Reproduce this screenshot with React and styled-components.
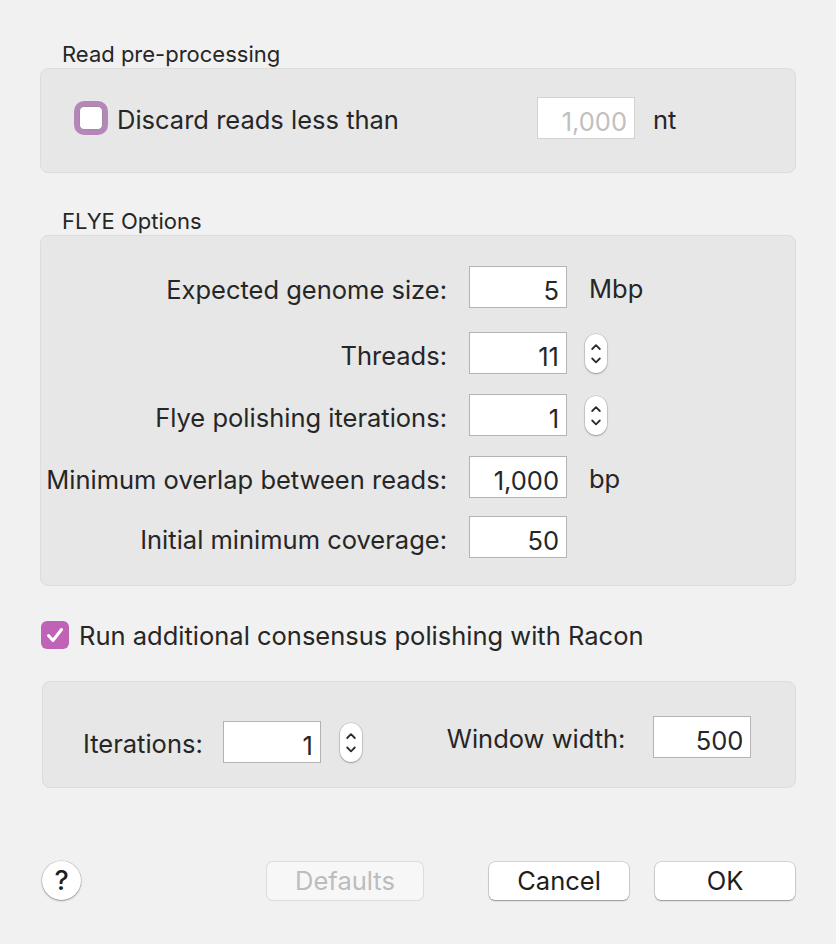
import React from "react";
import styled, { createGlobalStyle } from "styled-components";

const GlobalStyle = createGlobalStyle`
  html, body {
    margin: 0;
    padding: 0;
    background: #f1f1f1;
  }
  body {
    font-family: Inter, "Noto Sans", "Liberation Sans", sans-serif;
    color: #262626;
  }
`;

function Stepper({ left }) {
  return (
    <StepperBox $left={left}>
      <svg width="22" height="39" viewBox="0 0 22 39">
        <path d="M7.2 15 L11 11.2 L14.8 15" fill="none" stroke="#2b2b2b" strokeWidth="1.8" strokeLinecap="round" strokeLinejoin="round" />
        <path d="M7.2 24.5 L11 28.3 L14.8 24.5" fill="none" stroke="#2b2b2b" strokeWidth="1.8" strokeLinecap="round" strokeLinejoin="round" />
      </svg>
    </StepperBox>
  );
}

function App() {
  const flyeRows = [
    { label: "Expected genome size:", value: "5", unit: "Mbp", top: 0 },
    { label: "Threads:", value: "11", stepper: true, top: 24 },
    { label: "Flye polishing iterations:", value: "1", stepper: true, top: 20 },
    { label: "Minimum overlap between reads:", value: "1,000", unit: "bp", top: 20 },
    { label: "Initial minimum coverage:", value: "50", top: 18 },
  ];

  return (
    <Dialog>
      <GlobalStyle />
      <SectionTitle>Read pre-processing</SectionTitle>
      <GroupBox>
        <DiscardRow>
          <CheckLabel>
            <FocusCheck />
            <span>Discard reads less than</span>
          </CheckLabel>
          <NumberField readOnly disabled value="1,000" />
          <Unit>nt</Unit>
        </DiscardRow>
      </GroupBox>

      <SectionTitle $top={36}>FLYE Options</SectionTitle>
      <GroupBox $flye>
        {flyeRows.map((row) => (
          <FormRow key={row.label} $top={row.top}>
            <FieldLabel>{row.label}</FieldLabel>
            <NumberField readOnly value={row.value} />
            <Extra>
              {row.stepper && <Stepper left={-4} />}
              {row.unit && <Unit>{row.unit}</Unit>}
            </Extra>
          </FormRow>
        ))}
      </GroupBox>

      <RaconRow>
        <CheckedBox>
          <svg width="28" height="28" viewBox="0 0 28 28">
            <path d="M7.5 14.5 L12 19.5 L20.5 8.5" fill="none" stroke="#fff" strokeWidth="3" strokeLinecap="round" strokeLinejoin="round" />
          </svg>
        </CheckedBox>
        <span>Run additional consensus polishing with Racon</span>
      </RaconRow>

      <GroupBox $racon>
        <RaconFields>
          <FieldGroup>
            <FieldText>Iterations:</FieldText>
            <NumberField readOnly value="1" $gap={20} />
            <Stepper left={19} />
          </FieldGroup>
          <FieldGroup $raise>
            <FieldText>Window width:</FieldText>
            <NumberField readOnly value="500" $gap={28} />
          </FieldGroup>
        </RaconFields>
      </GroupBox>

      <ButtonBar>
        <HelpButton>?</HelpButton>
        <PushButton disabled $width={156}>
          Defaults
        </PushButton>
        <PushButton $width={140} $left={66}>
          Cancel
        </PushButton>
        <PushButton $width={140} $left={26}>
          OK
        </PushButton>
      </ButtonBar>
    </Dialog>
  );
}

export default App;

const font = `Inter, "Noto Sans", "Liberation Sans", sans-serif`;

const Dialog = styled.div`
  width: 836px;
  height: 944px;
  box-sizing: border-box;
  padding: 42px 40px 0 40px;
  background: #f1f1f1;
`;

const SectionTitle = styled.div`
  margin: ${({ $top }) => ($top ? `${$top}px` : "0")} 0 2px 22px;
  font-size: 22px;
  line-height: 24px;
  color: #262626;
`;

const GroupBox = styled.div`
  background: #e7e7e7;
  border: 1px solid #dcdcdc;
  border-radius: 8px;
  box-sizing: border-box;
  height: ${({ $flye, $racon }) => ($flye ? "351px" : $racon ? "107px" : "105px")};
  margin-left: ${({ $racon }) => ($racon ? "2px" : "0")};
  padding: ${({ $flye, $racon }) =>
    $flye ? "30px 0 0 0" : $racon ? "39px 0 0 40px" : "28px 0 0 33px"};
`;

const DiscardRow = styled.div`
  display: grid;
  grid-template-columns: 445px 98px auto;
  column-gap: 18px;
  align-items: center;
  font-size: 25.5px;
`;

const CheckLabel = styled.div`
  display: flex;
  align-items: center;
  gap: 14px;
  & > span {
    padding-top: 2px;
  }
`;

const FocusCheck = styled.div`
  width: 24px;
  height: 24px;
  border-radius: 5px;
  background: #fff;
  border: 1px solid #a08aa0;
  box-shadow: 0 0 0 5px #b587b8;
  margin-left: 5px;
  box-sizing: border-box;
`;

const NumberField = styled.input`
  width: 98px;
  height: 42px;
  box-sizing: border-box;
  border: 1px solid ${({ disabled }) => (disabled ? "#d2d2d2" : "#b3b3b3")};
  background: #fff;
  color: ${({ disabled }) => (disabled ? "#c0c0c0" : "#262626")};
  font-family: ${font};
  font-size: 25.5px;
  text-align: right;
  padding: 6px 7px 0 4px;
  margin: 0 0 0 ${({ $gap }) => ($gap ? `${$gap}px` : "0")};
  border-radius: 0;
  outline: none;
  &:disabled {
    -webkit-text-fill-color: #c0c0c0;
    opacity: 1;
  }
`;

const Unit = styled.span`
  font-size: 25.5px;
  padding-top: 3px;
`;

const FormRow = styled.div`
  display: grid;
  grid-template-columns: 406px 98px auto;
  column-gap: 22px;
  align-items: center;
  margin-top: ${({ $top }) => $top}px;
  font-size: 25.5px;
`;

const FieldLabel = styled.div`
  text-align: right;
  white-space: nowrap;
  padding-top: 4px;
`;

const FieldText = styled.span`
  padding-top: 3px;
`;

const Extra = styled.div`
  display: flex;
  align-items: center;
`;

const StepperBox = styled.div`
  width: 22px;
  height: 39px;
  margin-left: ${({ $left }) => ($left ? `${$left}px` : "0")};
  border-radius: 11px;
  background: #fff;
  box-shadow: 0 0 0 0.5px rgba(0, 0, 0, 0.18), 0 1px 2px rgba(0, 0, 0, 0.25);
  display: flex;
  align-items: center;
  justify-content: center;
`;

const RaconRow = styled.div`
  display: flex;
  align-items: center;
  gap: 10px;
  margin: 34px 0 31px 1px;
  font-size: 25.5px;
  height: 30px;
`;

const CheckedBox = styled.div`
  width: 28px;
  height: 28px;
  border-radius: 6px;
  background: #c062b6;
  display: flex;
  align-items: center;
  justify-content: center;
`;

const RaconFields = styled.div`
  display: flex;
  align-items: flex-start;
  gap: 85px;
  font-size: 25.5px;
`;

const FieldGroup = styled.div`
  display: flex;
  align-items: center;
  margin-top: ${({ $raise }) => ($raise ? "-5px" : "0")};
`;

const ButtonBar = styled.div`
  display: flex;
  align-items: center;
  margin-top: 73px;
  margin-left: 2px;
`;

const HelpButton = styled.button`
  width: 39px;
  height: 39px;
  border-radius: 50%;
  border: none;
  background: #fff;
  box-shadow: 0 0 0 0.5px rgba(0, 0, 0, 0.2), 0 1px 2px rgba(0, 0, 0, 0.3);
  font-family: ${font};
  font-size: 27px;
  font-weight: 500;
  color: #1e1e1e;
  padding: 0;
  margin-right: 186px;
`;

const PushButton = styled.button`
  width: ${({ $width }) => $width}px;
  height: 38px;
  margin-left: ${({ $left }) => ($left ? `${$left}px` : "0")};
  border-radius: 6px;
  border: none;
  background: ${({ disabled }) => (disabled ? "#f7f7f7" : "#fff")};
  box-shadow: ${({ disabled }) =>
    disabled
      ? "0 0 0 1px #dcdcdc"
      : "0 0 0 0.5px rgba(0, 0, 0, 0.22), 0 1px 1.5px rgba(0, 0, 0, 0.3)"};
  color: ${({ disabled }) => (disabled ? "#bcbcbc" : "#1e1e1e")};
  font-family: ${font};
  font-size: 25.5px;
  padding: 0;
`;
